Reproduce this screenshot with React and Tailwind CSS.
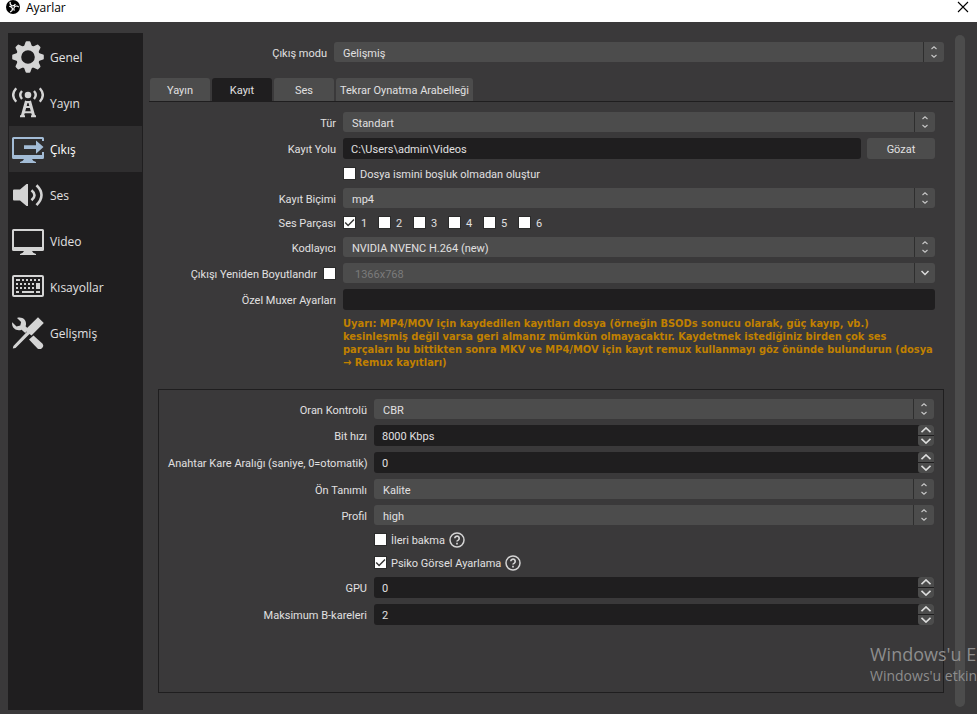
import { useState } from "react";

const LogoIcon = () => (
  <svg viewBox="0 0 16 16" className="size-3.5 shrink-0" fill="none">
    <circle cx="8" cy="8" r="8" fill="#000" />
    {[0, 120, 240].map((angle) => (
      <path
        key={angle}
        transform={`rotate(${angle} 8 8)`}
        d="M4.800 2.200Q4 5.400 6.900 6.600Q9.800 7 10.700 4.600"
        stroke="#fff"
        strokeWidth="1.300"
      />
    ))}
  </svg>
);

const GearIcon = () => (
  <svg viewBox="0 0 32 32" className="size-8 shrink-0" fill="currentColor">
    <path
      fillRule="evenodd"
      d="M16 4.200a11.800 11.800 0 1 0 0 23.600 11.800 11.800 0 0 0 0-23.600Zm0 5a6.800 6.800 0 1 1 0 13.600 6.800 6.800 0 0 1 0-13.600Z"
    />
    {[0, 45, 90, 135, 180, 225, 270, 315].map((angle) => (
      <path
        key={angle}
        transform={`rotate(${angle} 16 16)`}
        d="M11.800 6 13.600.900Q13.800.200 14.600.200h2.800q.800 0 1 .700L20.200 6Z"
      />
    ))}
  </svg>
);

const AntennaIcon = () => (
  <svg
    viewBox="0 0 32 32"
    className="size-8 shrink-0"
    fill="none"
    stroke="currentColor"
    strokeWidth="2.400"
  >
    <circle cx="16" cy="8" r="3.300" fill="currentColor" stroke="none" />
    <path d="M10 4Q6.500 8 10 12M22 4Q25.500 8 22 12" />
    <path d="M4.200 1.200Q-1.800 8 4.200 14.800M27.800 1.200Q33.800 8 27.800 14.800" />
    <path d="M14.500 14 10.200 29.500M17.500 14 21.800 29.500" strokeWidth="3" />
    <path d="M13.500 15h5M12.500 20h7M11 25.200h10M8 29.200h5M19 29.200h5" strokeWidth="2" />
  </svg>
);

const OutputIcon = () => (
  <svg viewBox="0 0 32 32" className="size-8 shrink-0" fill="currentColor">
    <path d="M1.500 4h29A1.500 1.500 0 0 1 32 5.500V8h-2V6H2v16h28v-3h2v5.500a1.500 1.500 0 0 1-1.500 1.500h-29A1.500 1.500 0 0 1 0 24.500v-19A1.500 1.500 0 0 1 1.500 4Z" />
    <path d="M12 26h8q.5 2 4 3v1H8v-1q3.500-1 4-3Z" />
    <path d="M12 12.300h12V7.500l7.500 6.600L24 20.800V16H12Z" />
  </svg>
);

const SpeakerIcon = () => (
  <svg viewBox="0 0 32 32" className="size-8 shrink-0" fill="currentColor">
    <path d="M2 10.500h6L14.500 5H16v22h-1.500L8 21.500H2a1 1 0 0 1-1-1v-9a1 1 0 0 1 1-1Z" />
    <path
      d="M19.500 11.200Q25.500 16 19.500 21.300M24.500 6.200Q34.500 16 24.500 26.200"
      fill="none"
      stroke="currentColor"
      strokeWidth="2.600"
    />
  </svg>
);

const MonitorIcon = () => (
  <svg viewBox="0 0 32 32" className="size-8 shrink-0" fill="currentColor">
    <path
      fillRule="evenodd"
      d="M1.500 4h29A1.500 1.500 0 0 1 32 5.500v19a1.500 1.500 0 0 1-1.500 1.500h-29A1.500 1.500 0 0 1 0 24.500v-19A1.500 1.500 0 0 1 1.500 4ZM2 6v16h28V6Z"
    />
    <path d="M12 26h8q.5 2 4 3v1H8v-1q3.500-1 4-3Z" />
  </svg>
);

const KeyboardIcon = () => (
  <svg viewBox="0 0 32 32" className="size-8 shrink-0" fill="currentColor">
    <rect
      x="1"
      y="5"
      width="30"
      height="20"
      rx="1"
      fill="none"
      stroke="currentColor"
      strokeWidth="2"
    />
    <path d="M4 8h4v2H4ZM10 8h2v2h-2ZM14 8h2v2h-2ZM18 8h2v2h-2ZM22 8h2v2h-2ZM26 8h2v2h-2Z" />
    <path d="M4 12h2v2H4ZM8 12h2v2H8ZM12 12h2v2h-2ZM16 12h2v2h-2ZM20 12h2v2h-2ZM24 12h4v6h-4Z" />
    <path d="M4 16h2v2H4ZM8 16h2v2H8ZM12 16h2v2h-2ZM16 16h2v2h-2ZM20 16h2v2h-2Z" />
    <path d="M4 20h3v2H4ZM10 20h12v2H10ZM24 20h4v2h-4Z" />
  </svg>
);

const ToolsIcon = () => (
  <svg viewBox="0 0 32 32" className="size-8 shrink-0" fill="currentColor">
    <path d="M5 1C11-1 15.500 4 13.600 9.200l3.200 3.300-3.600 3.600-3.600-3.300C4.500 14.800-.8 11 .200 5.200l4.300 4.300 3.800-.9.800-3.600Z" />
    <path d="m21.500 18.500 8.500 7.800a3.300 3.300 0 0 1-4.700 4.900l-8.300-8.700Z" />
    <path d="M26 .300 31.800 6 19.500 18.500l-2-1.500-14 14-2.700.500.600-2.500L15 14.700 13.500 12.500Z" />
  </svg>
);

const menu = [
  { name: "Genel", Icon: GearIcon },
  { name: "Yayın", Icon: AntennaIcon },
  { name: "Çıkış", Icon: OutputIcon },
  { name: "Ses", Icon: SpeakerIcon },
  { name: "Video", Icon: MonitorIcon },
  { name: "Kısayollar", Icon: KeyboardIcon },
  { name: "Gelişmiş", Icon: ToolsIcon },
];

const tabs = ["Yayın", "Kayıt", "Ses", "Tekrar Oynatma Arabelleği"];

function Row({ label, id, className = "", children }) {
  return (
    <div className={`grid gap-[7px] items-center ${className}`}>
      {label ? (
        <label htmlFor={id} className="pt-0.5 text-right whitespace-nowrap">
          {label}
        </label>
      ) : (
        <span />
      )}
      {children}
    </div>
  );
}

function Select({ id, value, disabled, label }) {
  return (
    <div className="relative h-5 w-full">
      <select
        id={id}
        aria-label={label}
        disabled={disabled}
        className={`h-5 w-full appearance-none rounded-[3px] bg-[#4c4c4c] pt-0.5 pr-6 outline-none disabled:text-[#7b7b7b] disabled:opacity-100 ${
          disabled ? "pl-3" : "pl-[9px]"
        }`}
      >
        <option>{value}</option>
      </select>
      <span className="pointer-events-none absolute inset-y-0 right-0 flex w-[21px] items-center justify-center border-l border-[#2e2e2e]">
        {disabled ? (
          <svg viewBox="0 0 8 6" className="h-1.5 w-2" fill="none">
            <path d="m.5 1 3.500 3.500L7.500 1" stroke="#dcdcdc" strokeWidth="1.500" />
          </svg>
        ) : (
          <svg viewBox="0 0 6 12" className="h-3 w-1.5" fill="none">
            <path
              d="M.5 3 3 .8 5.500 3M.5 9 3 11.200 5.500 9"
              stroke="#c8c8c8"
              strokeWidth="1.100"
            />
          </svg>
        )}
      </span>
    </div>
  );
}

function SpinBox({ id, initial, suffix = "" }) {
  const [value, setValue] = useState(initial);

  return (
    <div className="flex h-[21px] rounded-[3px] bg-[#1f1e1f]">
      <input
        id={id}
        value={value + suffix}
        onChange={(e) => setValue(parseInt(e.target.value) || 0)}
        className="min-w-0 flex-1 bg-transparent pt-0.5 pl-2 outline-none"
      />
      <div className="flex w-4 flex-col gap-px">
        <button
          aria-label="Artır"
          onClick={() => setValue(value + 1)}
          className="flex flex-1 items-center justify-center rounded-t-[3px] bg-[#4c4c4c]"
        >
          <svg viewBox="0 0 10 6" className="h-1.5 w-2.5" fill="none">
            <path d="M.5 5.200 5 .9 9.500 5.200" stroke="#dcdcdc" strokeWidth="1.600" />
          </svg>
        </button>
        <button
          aria-label="Azalt"
          onClick={() => setValue(Math.max(0, value - 1))}
          className="flex flex-1 items-center justify-center rounded-b-[3px] bg-[#4c4c4c]"
        >
          <svg viewBox="0 0 10 6" className="h-1.5 w-2.5" fill="none">
            <path d="M.5.8 5 5.100 9.500.8" stroke="#dcdcdc" strokeWidth="1.600" />
          </svg>
        </button>
      </div>
    </div>
  );
}

function CheckBox({ id, defaultChecked }) {
  return (
    <span className="relative flex size-[13px] shrink-0">
      <input
        id={id}
        type="checkbox"
        defaultChecked={defaultChecked}
        className="peer size-[13px] appearance-none border border-[#2b2b2b] bg-white"
      />
      <svg
        viewBox="0 0 13 13"
        className="pointer-events-none absolute inset-0 hidden peer-checked:block"
        fill="none"
      >
        <path d="m2.200 6.600 2.900 2.900 5.900-6" stroke="#333" strokeWidth="1.400" />
      </svg>
    </span>
  );
}

const HelpIcon = () => (
  <svg
    viewBox="0 0 16 16"
    className="size-4 shrink-0"
    fill="none"
    stroke="#d4d4d4"
    strokeWidth="1.500"
  >
    <circle cx="8" cy="8" r="7" />
    <path d="M5.800 6.300a2.200 2.200 0 1 1 3.500 1.800Q8 8.900 8 9.600" strokeWidth="1.700" />
    <path d="M8 10.800v1.700" strokeWidth="1.700" />
  </svg>
);

const outer = "grid-cols-[186px_1fr]";
const inner = "grid-cols-[199px_1fr]";

export default function App() {
  const [page, setPage] = useState("Çıkış");
  const [tab, setTab] = useState("Kayıt");

  return (
    <div className="relative flex min-h-screen flex-col overflow-hidden bg-[#3a393a] font-[Roboto,sans-serif] text-[11px] leading-[13px] text-[#e1e0e1]">
      <header className="flex h-[22px] items-start bg-white pr-2 pl-1.5 font-['Open_Sans','Noto_Sans',sans-serif] text-xs text-black">
        <LogoIcon />
        <h1 className="ml-1.5 flex-1">Ayarlar</h1>
        <button aria-label="Kapat" className="pt-px">
          <svg viewBox="0 0 12 12" className="size-3" stroke="#000" strokeWidth="1.100">
            <path d="m1 1 10 10M11 1 1 11" />
          </svg>
        </button>
      </header>

      <div className="flex flex-1 pt-[11px] pr-3 pb-1 pl-2">
        <nav className="flex w-[135px] shrink-0 flex-col bg-[#1f1e1f] p-px font-['Open_Sans','Noto_Sans',sans-serif] text-xs">
          {menu.map(({ name, Icon }) => (
            <button
              key={name}
              onClick={() => setPage(name)}
              className={`flex h-[46px] items-center gap-1.5 pl-[3px] text-left ${
                page === name ? "bg-[#2f2e2f] text-white" : ""
              }`}
            >
              <span
                className={`flex ${
                  page === name ? "text-[#a3bcd6]" : "text-[#d4d4d4]"
                }`}
              >
                <Icon />
              </span>
              <span className="pt-0.5">{name}</span>
            </button>
          ))}
        </nav>

        <main className="flex min-w-0 flex-1 flex-col pt-[9px] pb-[17px] pl-1.5">
          <div className="pr-[9px]">
            <Row label="Çıkış modu" id="mode" className="grid-cols-[178px_1fr]">
              <Select id="mode" value="Gelişmiş" />
            </Row>
          </div>

          <div role="tablist" className="mt-4 flex gap-0.5 border-b border-[#1f1e1f] pl-px">
            {tabs.map((name) => (
              <button
                key={name}
                role="tab"
                aria-selected={tab === name}
                onClick={() => setTab(name)}
                className={`h-[23px] min-w-[60px] rounded-t-[3px] px-1 pt-0.5 whitespace-nowrap ${
                  tab === name ? "bg-[#1f1e1f]" : "bg-[#4c4c4c]"
                }`}
              >
                {name}
              </button>
            ))}
          </div>

          <div className="flex flex-col gap-1.5 pt-2.5 pr-[18px] pl-px">
            <Row label="Tür" id="type" className={outer}>
              <Select id="type" value="Standart" />
            </Row>
            <Row label="Kayıt Yolu" id="path" className={outer}>
              <div className="flex gap-1.5">
                <input
                  id="path"
                  defaultValue="C:\Users\admin\Videos"
                  className="h-[21px] min-w-0 flex-1 rounded-[3px] bg-[#1f1e1f] px-2 pt-0.5 outline-none"
                />
                <button className="h-[21px] w-[68px] rounded-[3px] bg-[#4c4c4c] pt-0.5">
                  Gözat
                </button>
              </div>
            </Row>
            <Row className={outer}>
              <div className="flex h-[17px] items-center gap-1">
                <CheckBox id="nospace" />
                <label htmlFor="nospace" className="pt-0.5">
                  Dosya ismini boşluk olmadan oluştur
                </label>
              </div>
            </Row>
            <Row label="Kayıt Biçimi" id="format" className={outer}>
              <Select id="format" value="mp4" />
            </Row>
            <Row label="Ses Parçası" id="track1" className={outer}>
              <div className="flex h-[17px] items-center">
                {[1, 2, 3, 4, 5, 6].map((n) => (
                  <div key={n} className="flex w-[35px] items-center gap-[5px]">
                    <CheckBox id={`track${n}`} defaultChecked={n === 1} />
                    <label htmlFor={`track${n}`} className="pt-0.5">
                      {n}
                    </label>
                  </div>
                ))}
              </div>
            </Row>
            <Row label="Kodlayıcı" id="encoder" className={outer}>
              <Select id="encoder" value="NVIDIA NVENC H.264 (new)" />
            </Row>
            <div className={`grid items-center gap-[7px] ${outer}`}>
              <div className="flex items-center justify-end gap-1.5">
                <label htmlFor="rescale" className="pt-0.5 whitespace-nowrap">
                  Çıkışı Yeniden Boyutlandır
                </label>
                <CheckBox id="rescale" />
              </div>
              <Select value="1366x768" label="Çözünürlük" disabled />
            </div>
            <Row label="Özel Muxer Ayarları" id="muxer" className={outer}>
              <input
                id="muxer"
                className="h-[21px] w-full rounded-[3px] bg-[#1f1e1f] px-2 pt-0.5 outline-none"
              />
            </Row>
            <Row className={outer}>
              <p className="pt-px font-['DejaVu_Sans_Condensed','DejaVu_Sans',sans-serif] font-bold text-[#c08000]">
                Uyarı: MP4/MOV için kaydedilen kayıtları dosya (örneğin BSODs sonucu
                olarak, güç kayıp, vb.) kesinleşmiş değil varsa geri almanız mümkün
                olmayacaktır. Kaydetmek istediğiniz birden çok ses parçaları bu
                bittikten sonra MKV ve MP4/MOV için kayıt remux kullanmayı göz önünde
                bulundurun (dosya → Remux kayıtları)
              </p>
            </Row>
          </div>

          <section className="mt-5 mr-[9px] ml-[9px] flex flex-1 flex-col gap-1.5 border border-[#1f1e1f] p-[9px]">
            <Row label="Oran Kontrolü" id="rate" className={inner}>
              <Select id="rate" value="CBR" />
            </Row>
            <Row label="Bit hızı" id="bitrate" className={inner}>
              <SpinBox id="bitrate" initial={8000} suffix=" Kbps" />
            </Row>
            <Row
              label="Anahtar Kare Aralığı (saniye, 0=otomatik)"
              id="keyint"
              className={inner}
            >
              <SpinBox id="keyint" initial={0} />
            </Row>
            <Row label="Ön Tanımlı" id="preset" className={inner}>
              <Select id="preset" value="Kalite" />
            </Row>
            <Row label="Profil" id="profile" className={inner}>
              <Select id="profile" value="high" />
            </Row>
            <Row className={inner}>
              <div className="flex h-[17px] items-center gap-1">
                <CheckBox id="lookahead" />
                <label htmlFor="lookahead" className="pt-0.5">
                  İleri bakma
                </label>
                <HelpIcon />
              </div>
            </Row>
            <Row className={inner}>
              <div className="flex h-[17px] items-center gap-1">
                <CheckBox id="psycho" defaultChecked />
                <label htmlFor="psycho" className="pt-0.5">
                  Psiko Görsel Ayarlama
                </label>
                <HelpIcon />
              </div>
            </Row>
            <Row label="GPU" id="gpu" className={inner}>
              <SpinBox id="gpu" initial={0} />
            </Row>
            <Row label="Maksimum B-kareleri" id="bframes" className={inner}>
              <SpinBox id="bframes" initial={2} />
            </Row>
          </section>
        </main>

        <div className="mt-0.5 mb-[3px] ml-0.5 w-2.5 shrink-0 rounded-full bg-[#4c4c4c]" />
      </div>

      {/* activation watermark */}
      <div className="pointer-events-none absolute right-0 bottom-7 w-[107px] font-['Open_Sans','Noto_Sans',sans-serif] whitespace-nowrap text-[#8d8d8d]">
        <p className="text-lg leading-6">Windows'u E</p>
        <p className="text-sm leading-5">Windows'u etkin</p>
      </div>
    </div>
  );
}
